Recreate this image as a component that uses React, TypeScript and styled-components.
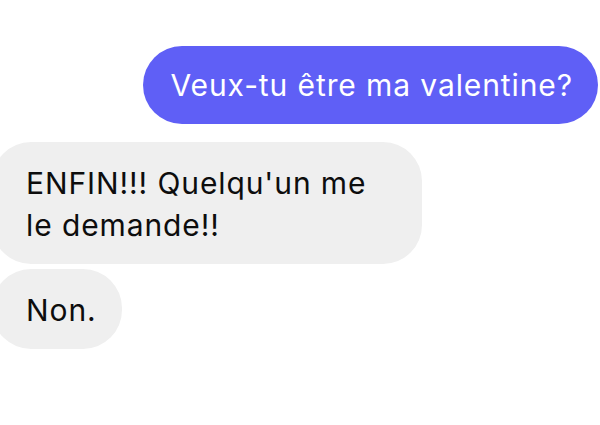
import React from 'react';
import styled, { createGlobalStyle } from 'styled-components';

const GlobalStyle = createGlobalStyle`
  html, body {
    margin: 0;
    padding: 0;
    background: #ffffff;
  }
  body {
    font-family: Inter, "Noto Sans", Roboto, sans-serif;
    -webkit-font-smoothing: antialiased;
  }
`;

const Thread = styled.div`
  display: flex;
  flex-direction: column;
  gap: 5px;
  padding: 46px 2px 0 0;
  width: 600px;
  box-sizing: border-box;
  overflow: hidden;
`;

const Row = styled.div<{ $mine?: boolean }>`
  display: flex;
  justify-content: ${(p) => (p.$mine ? 'flex-end' : 'flex-start')};
  margin-bottom: ${(p) => (p.$mine ? '13px' : '0')};
`;

const Bubble = styled.div<{ $mine?: boolean }>`
  box-sizing: border-box;
  max-width: ${(p) => (p.$mine ? '480px' : '430px')};
  padding: ${(p) => (p.$mine ? '18px 25px 18px 27px' : '19.5px 25px 18.5px 34px')};
  margin-left: ${(p) => (p.$mine ? '0' : '-8px')};
  border-radius: 39px;
  background: ${(p) => (p.$mine ? '#5f5ff6' : '#efefef')};
  color: ${(p) => (p.$mine ? '#ffffff' : '#0d0d0d')};
  font-size: 30px;
  line-height: 42px;
  letter-spacing: 0.9px;
`;

const App: React.FC = () => (
  <>
    <GlobalStyle />
    <Thread>
      <Row $mine>
        <Bubble $mine>Veux-tu être ma valentine?</Bubble>
      </Row>
      <Row>
        <Bubble>ENFIN!!! Quelqu'un me le demande!!</Bubble>
      </Row>
      <Row>
        <Bubble>Non.</Bubble>
      </Row>
    </Thread>
  </>
);

export default App;
